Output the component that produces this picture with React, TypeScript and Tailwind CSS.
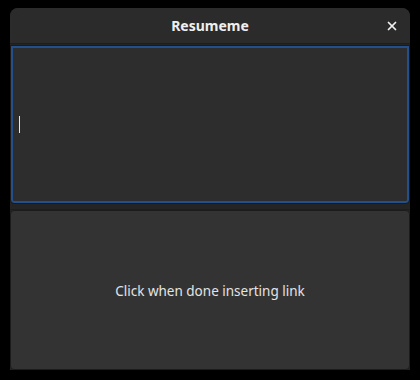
import { X } from 'lucide-react';

const App = () => {
  return (
    <div className="w-[420px] h-[380px] bg-black pt-[8px] pl-[10px]" style={{ fontFamily: '"Noto Sans", "Open Sans", sans-serif' }}>
      <div className="w-[400px] h-[362px] flex flex-col bg-[#242424] rounded-t-[8px] overflow-hidden">
        <div className="h-[36px] shrink-0 flex items-center justify-center relative bg-[#2b2b2b] border-b border-[#1e1e1e]">
          <span className="text-[14px] font-bold text-[#efefef]">Resumeme</span>
          <button className="absolute right-[11px] top-[11px] text-[#f0f0f0]">
            <X size={14} strokeWidth={3} />
          </button>
        </div>
        <div className="h-[159px] shrink-0 mt-[1px] bg-[#2d2d2d] rounded-b-[4px] border border-[#1a1a1a] flex items-center shadow-[inset_0_0_0_2px_#23508a]">
          <div className="w-[1px] h-[17px] bg-[#e6e6e6] mt-[-1px] ml-[8px]" />
        </div>
        <div className="h-[6px] shrink-0 border-b border-[#1e1e1e]" />
        <button className="flex-1 bg-[#333333] border border-[#1c1c1c] rounded-[4px] text-[13.5px] text-[#e4e4e4] flex items-center justify-center pt-[2px]">
          Click when done inserting link
        </button>
      </div>
    </div>
  );
};

export default App;
